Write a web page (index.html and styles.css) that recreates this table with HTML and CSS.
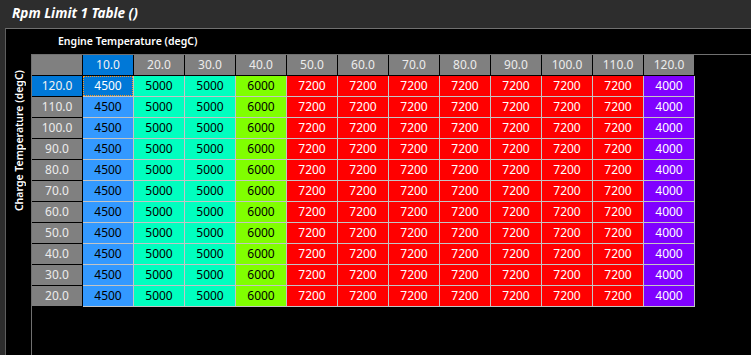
FILE: index.html
```html
<!DOCTYPE html>
<html>
<head>
<meta charset="utf-8">
<link rel="stylesheet" href="styles.css">
</head>
<body>
<div class="titlebar">Rpm Limit 1 Table ()</div>
<div class="frame">
  <div class="corner"></div>
  <div class="hlabel">Engine Temperature (degC)</div>
  <div class="vcell"><span class="vlabel">Charge Temperature (degC)</span></div>
  <div class="scroll">
    <table class="grid">
      <tr class="head">
        <th class="hc"></th>
        <th class="hc sel">10.0</th><th class="hc">20.0</th><th class="hc">30.0</th><th class="hc">40.0</th><th class="hc">50.0</th><th class="hc">60.0</th><th class="hc">70.0</th><th class="hc">80.0</th><th class="hc">90.0</th><th class="hc">100.0</th><th class="hc">110.0</th><th class="hc">120.0</th>
      </tr>
      <tr><th class="rh sel">120.0</th><td class="c-a cur"><div class="focus">4500</div></td><td class="c-b">5000</td><td class="c-b">5000</td><td class="c-c">6000</td><td class="c-d">7200</td><td class="c-d">7200</td><td class="c-d">7200</td><td class="c-d">7200</td><td class="c-d">7200</td><td class="c-d">7200</td><td class="c-d">7200</td><td class="c-e">4000</td></tr>
      <tr><th class="rh">110.0</th><td class="c-a">4500</td><td class="c-b">5000</td><td class="c-b">5000</td><td class="c-c">6000</td><td class="c-d">7200</td><td class="c-d">7200</td><td class="c-d">7200</td><td class="c-d">7200</td><td class="c-d">7200</td><td class="c-d">7200</td><td class="c-d">7200</td><td class="c-e">4000</td></tr>
      <tr><th class="rh">100.0</th><td class="c-a">4500</td><td class="c-b">5000</td><td class="c-b">5000</td><td class="c-c">6000</td><td class="c-d">7200</td><td class="c-d">7200</td><td class="c-d">7200</td><td class="c-d">7200</td><td class="c-d">7200</td><td class="c-d">7200</td><td class="c-d">7200</td><td class="c-e">4000</td></tr>
      <tr><th class="rh">90.0</th><td class="c-a">4500</td><td class="c-b">5000</td><td class="c-b">5000</td><td class="c-c">6000</td><td class="c-d">7200</td><td class="c-d">7200</td><td class="c-d">7200</td><td class="c-d">7200</td><td class="c-d">7200</td><td class="c-d">7200</td><td class="c-d">7200</td><td class="c-e">4000</td></tr>
      <tr><th class="rh">80.0</th><td class="c-a">4500</td><td class="c-b">5000</td><td class="c-b">5000</td><td class="c-c">6000</td><td class="c-d">7200</td><td class="c-d">7200</td><td class="c-d">7200</td><td class="c-d">7200</td><td class="c-d">7200</td><td class="c-d">7200</td><td class="c-d">7200</td><td class="c-e">4000</td></tr>
      <tr><th class="rh">70.0</th><td class="c-a">4500</td><td class="c-b">5000</td><td class="c-b">5000</td><td class="c-c">6000</td><td class="c-d">7200</td><td class="c-d">7200</td><td class="c-d">7200</td><td class="c-d">7200</td><td class="c-d">7200</td><td class="c-d">7200</td><td class="c-d">7200</td><td class="c-e">4000</td></tr>
      <tr><th class="rh">60.0</th><td class="c-a">4500</td><td class="c-b">5000</td><td class="c-b">5000</td><td class="c-c">6000</td><td class="c-d">7200</td><td class="c-d">7200</td><td class="c-d">7200</td><td class="c-d">7200</td><td class="c-d">7200</td><td class="c-d">7200</td><td class="c-d">7200</td><td class="c-e">4000</td></tr>
      <tr><th class="rh">50.0</th><td class="c-a">4500</td><td class="c-b">5000</td><td class="c-b">5000</td><td class="c-c">6000</td><td class="c-d">7200</td><td class="c-d">7200</td><td class="c-d">7200</td><td class="c-d">7200</td><td class="c-d">7200</td><td class="c-d">7200</td><td class="c-d">7200</td><td class="c-e">4000</td></tr>
      <tr><th class="rh">40.0</th><td class="c-a">4500</td><td class="c-b">5000</td><td class="c-b">5000</td><td class="c-c">6000</td><td class="c-d">7200</td><td class="c-d">7200</td><td class="c-d">7200</td><td class="c-d">7200</td><td class="c-d">7200</td><td class="c-d">7200</td><td class="c-d">7200</td><td class="c-e">4000</td></tr>
      <tr><th class="rh">30.0</th><td class="c-a">4500</td><td class="c-b">5000</td><td class="c-b">5000</td><td class="c-c">6000</td><td class="c-d">7200</td><td class="c-d">7200</td><td class="c-d">7200</td><td class="c-d">7200</td><td class="c-d">7200</td><td class="c-d">7200</td><td class="c-d">7200</td><td class="c-e">4000</td></tr>
      <tr><th class="rh">20.0</th><td class="c-a">4500</td><td class="c-b">5000</td><td class="c-b">5000</td><td class="c-c">6000</td><td class="c-d">7200</td><td class="c-d">7200</td><td class="c-d">7200</td><td class="c-d">7200</td><td class="c-d">7200</td><td class="c-d">7200</td><td class="c-d">7200</td><td class="c-e">4000</td></tr>
    </table>
  </div>
</div>
</body>
</html>
```
FILE: styles.css
```css
* { box-sizing: border-box; }
html, body { margin: 0; padding: 0; }
body {
  width: 751px;
  height: 355px;
  overflow: hidden;
  background: #2d2d2d;
  font-family: "Noto Sans", "Open Sans", sans-serif;
  display: flex;
  flex-direction: column;
}
.titlebar {
  height: 28px;
  flex: none;
  padding-left: 12px;
  padding-bottom: 2px;
  display: flex;
  align-items: center;
  color: #ffffff;
  font-size: 13.5px;
  font-weight: 700;
  font-style: italic;
}
.frame {
  flex: 1;
  margin-left: 5px;
  border-top: 1px solid #707070;
  border-left: 1px solid #5e5e5e;
  background: #000;
  display: grid;
  grid-template-columns: 25px 1fr;
  grid-template-rows: 25px 1fr;
  min-height: 0;
}
.hlabel {
  padding-left: 27px;
  padding-bottom: 2px;
  display: flex;
  align-items: center;
  color: #fff;
  font-size: 10.5px;
  font-weight: 600;
  white-space: nowrap;
}
.vcell {
  display: flex;
  flex-direction: column;
  align-items: center;
  padding-top: 16px;
}
.vlabel {
  writing-mode: vertical-rl;
  transform: rotate(180deg);
  color: #fff;
  font-size: 10.5px;
  font-weight: 600;
  white-space: nowrap;
}
.scroll {
  border-top: 1px solid #707070;
  border-left: 1px solid #707070;
  min-height: 0;
  overflow: hidden;
}
.grid {
  border-collapse: separate;
  border-spacing: 0;
  table-layout: fixed;
  font-size: 12px;
}
.grid th, .grid td {
  box-sizing: content-box;
  width: 50px;
  height: 20px;
  padding: 0;
  text-align: center;
  vertical-align: middle;
  line-height: 20px;
  font-weight: 400;
  white-space: nowrap;
}
.grid th {
  background: #808080;
  color: #ececec;
  border-right: 1px solid #000;
  border-bottom: 1px solid #000;
}
.grid th.sel {
  background: #0078d7;
  color: #f2f2f2;
}
.grid td {
  border-right: 1px solid #c4c4c4;
  border-bottom: 1px solid #c4c4c4;
  color: #000;
}
.c-a { background: #3399ff; }
.c-b { background: #00ffbf; }
.c-c { background: #80ff00; }
.c-d { background: #ff0000; color: #fff !important; }
.c-e { background: #8000ff; color: #fff !important; }
.grid td.cur { background: #0078d7; color: #fff; }
.focus {
  height: 20px;
  line-height: 18px;
  border: 1px dotted #ff9a1f;
}
```
